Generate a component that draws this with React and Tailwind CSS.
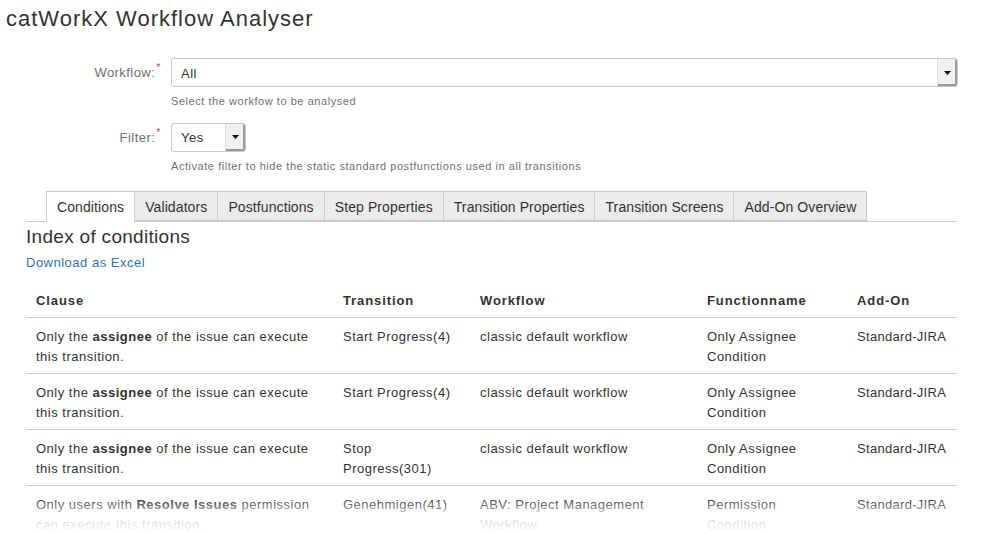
import React from 'react';

const tabs = ['Conditions', 'Validators', 'Postfunctions', 'Step Properties', 'Transition Properties', 'Transition Screens', 'Add-On Overview'];

const rows = [
    { pre: 'Only the ', bold: 'assignee', post: ' of the issue can execute this transition.', transition: 'Start Progress(4)', workflow: 'classic default workflow', fn: 'Only Assignee Condition', addon: 'Standard-JIRA' },
    { pre: 'Only the ', bold: 'assignee', post: ' of the issue can execute this transition.', transition: 'Start Progress(4)', workflow: 'classic default workflow', fn: 'Only Assignee Condition', addon: 'Standard-JIRA' },
    { pre: 'Only the ', bold: 'assignee', post: ' of the issue can execute this transition.', transition: 'Stop Progress(301)', workflow: 'classic default workflow', fn: 'Only Assignee Condition', addon: 'Standard-JIRA' },
    { pre: 'Only users with ', bold: 'Resolve Issues', post: ' permission can execute this transition.', transition: 'Genehmigen(41)', workflow: 'ABV: Project Management Workflow', fn: 'Permission Condition', addon: 'Standard-JIRA' },
];

const SelectBox = ({ value, width }) => (
    <div className={`flex h-[29px] ${width} border border-[#c8c8c8] rounded-[3px] bg-white overflow-hidden`}>
        <div className="flex-1 flex items-center pl-[9px] pt-[2px] text-[13px] text-[#333]">{value}</div>
        <div className="w-[20px] flex items-center justify-center bg-[#f0f0f0] border-l border-[#dcdcdc] shadow-[inset_-2px_-2px_0_#9a9a9a]">
            <svg width="7" height="4" viewBox="0 0 7 4"><path d="M0 0h7L3.5 4z" fill="#111" /></svg>
        </div>
    </div>
);

const FieldRow = ({ label, children, help }) => (
    <div className="flex">
        <div className="w-[171px] flex justify-end pr-[10px] pt-[5px] text-[13px] text-[#707070] tracking-[0.45px]">
            {label}:<span className="text-[#d04437] text-[11px] leading-none -mt-[1px] ml-[1px]">*</span>
        </div>
        <div className="flex-1">
            {children}
            <div className="mt-[6px] text-[11px] text-[#707070] tracking-[0.55px]">{help}</div>
        </div>
    </div>
);

const App = () => {
    return (
        <div className="w-[984px] h-[534px] overflow-hidden bg-white text-[#333] relative tracking-[0.5px]" style={{ fontFamily: '"Liberation Sans", Arial, sans-serif' }}>
            <h1 className="pl-[6px] pt-[5px] text-[22px] leading-[28px] tracking-[1px]">catWorkX Workflow Analyser</h1>

            <div className="mt-[25px] pr-[26px] space-y-[13px]">
                <FieldRow label="Workflow" help="Select the workfow to be analysed">
                    <SelectBox value="All" width="w-full" />
                </FieldRow>
                <FieldRow label="Filter" help="Activate filter to hide the static standard postfunctions used in all transitions">
                    <SelectBox value="Yes" width="w-[75px]" />
                </FieldRow>
            </div>

            <div className="ml-[26px] mr-[27px] mt-[17px]">
                {/* Tabs */}
                <div className="flex pl-[20px] border-b border-[#ccc] h-[31px] tracking-[0.1px]">
                    {tabs.map((tab, i) => (
                        <div
                            key={tab}
                            className={`px-[10px] flex items-center pt-[2px] text-[14px] border border-[#ccc] -ml-px first:ml-0 ${i === 0 ? 'bg-white border-b-white h-[31px]' : 'bg-[#ebebeb] h-[30px]'}`}
                        >
                            {tab}
                        </div>
                    ))}
                </div>

                <h2 className="text-[19px] leading-[28px] mt-[1px] tracking-[0.3px]">Index of conditions</h2>
                <a className="block text-[13px] text-[#3572b0] leading-[18px] mt-[3px]">Download as Excel</a>

                <table className="w-full table-fixed mt-[11px] text-[13px] border-collapse">
                    <colgroup>
                        <col className="w-[307px]" />
                        <col className="w-[137px]" />
                        <col className="w-[227px]" />
                        <col className="w-[150px]" />
                        <col className="w-[110px]" />
                    </colgroup>
                    <thead>
                        <tr className="border-b border-[#ccc] text-left">
                            {['Clause', 'Transition', 'Workflow', 'Functionname', 'Add-On'].map((h) => (
                                <th key={h} className="px-[10px] pt-[8px] pb-[6px] leading-[20px] font-bold tracking-[0.9px]">{h}</th>
                            ))}
                        </tr>
                    </thead>
                    <tbody>
                        {rows.map((r, i) => (
                            <tr key={i} className="border-b border-[#ccc] align-top">
                                <td className="px-[10px] pt-[9px] pb-[6px] leading-[20px]">{r.pre}<b>{r.bold}</b>{r.post}</td>
                                <td className="px-[10px] pt-[9px] pb-[6px] leading-[20px]">{r.transition}</td>
                                <td className="px-[10px] pt-[9px] pb-[6px] leading-[20px]">{r.workflow}</td>
                                <td className="px-[10px] pt-[9px] pb-[6px] leading-[20px]">{r.fn}</td>
                                <td className="pl-[10px] pt-[9px] pb-[6px] leading-[20px] whitespace-nowrap tracking-[0.3px]">{r.addon}</td>
                            </tr>
                        ))}
                    </tbody>
                </table>
            </div>

            {/* fade at the bottom */}
            <div className="absolute left-0 right-0 bottom-0 h-[36px] bg-gradient-to-b from-white/0 via-white/75 to-white pointer-events-none" />
        </div>
    );
};

export default App;
